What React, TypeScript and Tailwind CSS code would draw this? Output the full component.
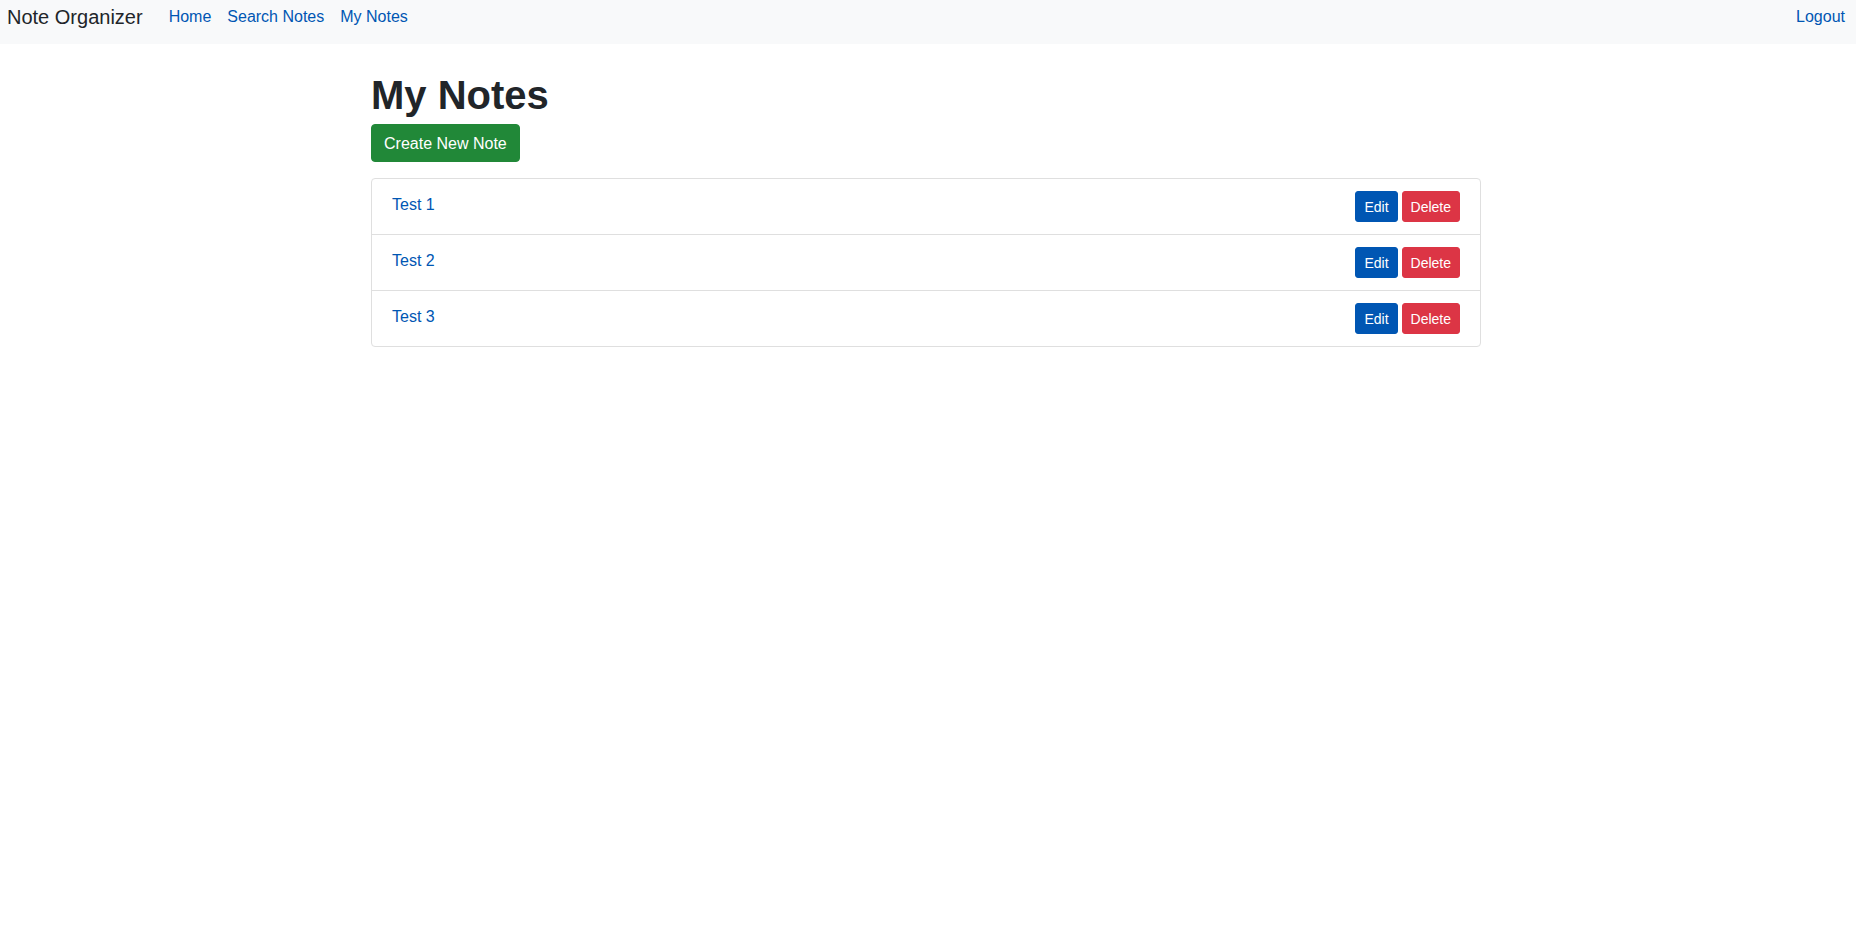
import React from "react";

const notes = [
  { id: 1, title: "Test 1" },
  { id: 2, title: "Test 2" },
  { id: 3, title: "Test 3" },
];

const font = { fontFamily: '"Segoe UI", "Liberation Sans", Arial, sans-serif' };

function Navbar() {
  return (
    <nav className="flex h-[44px] items-start justify-between bg-[#f8f9fa] pl-[7px] pr-[11px]">
      <div className="flex items-start">
        <a href="#" className="pt-[2px] text-[20px] leading-[30px] text-[#212529]">
          Note Organizer
        </a>
        <ul className="ml-[18px] flex items-start">
          {["Home", "Search Notes", "My Notes"].map((label) => (
            <li key={label}>
              <a href="#" className="block px-[8px] pt-[5px] text-[16px] leading-[24px] text-[#0056b3]">
                {label}
              </a>
            </li>
          ))}
        </ul>
      </div>
      <a href="#" className="block pt-[5px] text-[16px] leading-[24px] text-[#0056b3]">
        Logout
      </a>
    </nav>
  );
}

export default function App() {
  return (
    <div className="min-h-screen bg-white text-[#212529]" style={font}>
      <Navbar />
      <main className="mx-auto w-[1110px] -translate-x-[2px] pt-[27px]">
        <h1 className="mb-[5px] text-[40px] font-semibold leading-[48px]">My Notes</h1>
        <button className="h-[38px] rounded-[4px] border border-[#218838] bg-[#218838] px-[12px] pt-[1px] text-[16px] leading-[24px] text-white">
          Create New Note
        </button>
        <ul className="mt-[16px] rounded-[4px] border border-[#dfdfdf]">
          {notes.map((note, i) => (
            <li
              key={note.id}
              className={
                "flex items-start justify-between px-[20px] py-[12px]" +
                (i > 0 ? " border-t border-[#dfdfdf]" : "")
              }
            >
              <a href="#" className="pt-[2px] text-[16px] leading-[24px] text-[#0056b3]">
                {note.title}
              </a>
              <div className="flex gap-[4px]">
                <button className="h-[31px] rounded-[3px] border border-[#0056b3] bg-[#0056b3] px-[8px] pt-[2px] text-[14px] leading-[21px] text-white">
                  Edit
                </button>
                <button className="h-[31px] rounded-[3px] border border-[#dc3545] bg-[#dc3545] px-[8px] pt-[2px] text-[14px] leading-[21px] text-white">
                  Delete
                </button>
              </div>
            </li>
          ))}
        </ul>
      </main>
    </div>
  );
}
